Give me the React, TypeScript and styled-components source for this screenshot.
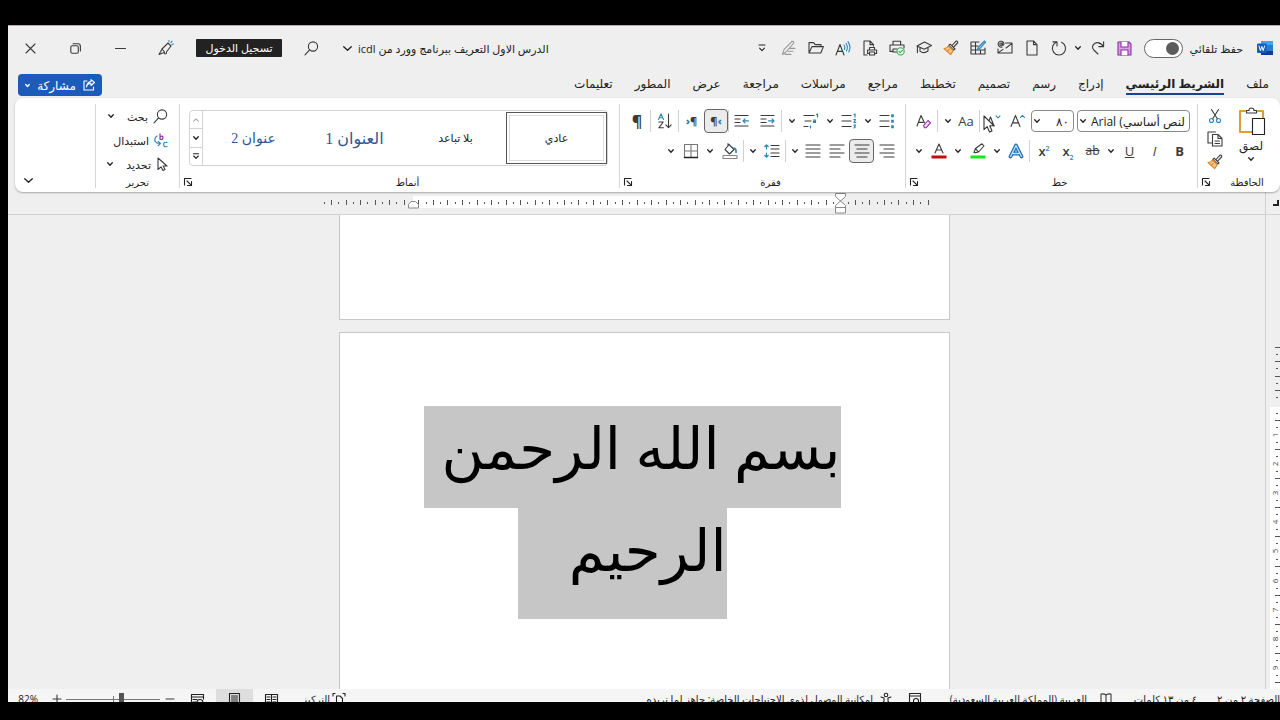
import React from "react";
import styled, { createGlobalStyle } from "styled-components";

const uiFont = `"Open Sans", "DejaVu Sans", sans-serif`;
const blue = "#2a86b8";
const ink = "#3b3b3b";

const GlobalStyle = createGlobalStyle`
  * { box-sizing: border-box; }
  body { margin: 0; background: #000; overflow: hidden; }
  button, input { font: inherit; color: inherit; }
  svg { display: block; flex: none; overflow: visible; }
`;

const Screen = styled.div`
  height: 100vh;
  padding: 25px 0 18px 8px;
  background: #000;
  display: flex;
`;

const Window = styled.main`
  flex: 1;
  min-width: 0;
  display: flex;
  flex-direction: column;
  overflow: hidden;
  background: #efefef;
  border-top: 1px solid #b5adb0;
  font-family: ${uiFont};
  font-size: 11px;
  color: #222;
  white-space: nowrap;
`;

const TitleBar = styled.header`
  height: 44px;
  flex: none;
  display: flex;
  justify-content: space-between;
  align-items: center;
`;

const BarGroup = styled.div`
  display: flex;
  align-items: center;
`;

const Cell = styled.button<{ $w?: number; $h?: number; $on?: boolean }>`
  width: ${(p) => p.$w ?? 27}px;
  height: ${(p) => p.$h ?? 24}px;
  flex: none;
  padding: 0;
  border: 0;
  background: none;
  display: flex;
  align-items: center;
  justify-content: center;
  ${(p) =>
    p.$on &&
    `
    background: #ebebeb;
    border: 1px solid #666;
    border-radius: 4px;
  `}
`;

const WordLogo = styled.span`
  width: 30px;
  display: flex;
  justify-content: center;
`;

const AutoSave = styled.label`
  width: 112px;
  padding-right: 7px;
  display: flex;
  align-items: center;
  justify-content: space-between;
`;

const Toggle = styled.input`
  appearance: none;
  width: 39px;
  height: 19px;
  margin: 0 0 0 6px;
  border: 1px solid #666;
  border-radius: 10px;
  background: #fff;
  display: flex;
  align-items: center;
  padding: 0 3px;
  &::before {
    content: "";
    width: 13px;
    height: 13px;
    border-radius: 50%;
    background: #5c5c5c;
  }
`;

const DocTitle = styled.h1`
  margin: 0;
  font-size: 11px;
  font-weight: 400;
`;

const SignIn = styled.button`
  width: 86px;
  height: 18px;
  margin: 0 4px 0 8px;
  padding: 0;
  border: 0;
  border-radius: 1px;
  background: #222;
  color: #fff;
  line-height: 18px;
`;

const TabBar = styled.nav`
  height: 28px;
  flex: none;
  display: flex;
  align-items: center;
  padding: 2px 11px 0 10px;
  gap: 22px;
`;

const Tab = styled.a<{ $active?: boolean }>`
  height: 20px;
  line-height: 18px;
  font-size: 12px;
  color: #222;
  text-decoration: none;
  font-weight: ${(p) => (p.$active ? 700 : 400)};
  border-bottom: 2px solid ${(p) => (p.$active ? "#1c4390" : "transparent")};
`;

const Share = styled.button`
  width: 84px;
  height: 22px;
  margin-right: auto;
  padding: 0 7px;
  border: 0;
  border-radius: 4px;
  background: #1b5cbb;
  color: #fff;
  font-size: 12px;
  display: flex;
  align-items: center;
  justify-content: space-between;
`;

const Ribbon = styled.section`
  height: 94px;
  flex: none;
  margin-left: 7px;
  background: #fff;
  border-radius: 8px;
  box-shadow: 0 1px 2px rgba(0, 0, 0, 0.3);
  display: flex;
  padding: 6px 0 4px;
  z-index: 1;
`;

const Group = styled.section<{ $w?: number }>`
  ${(p) => (p.$w ? `width: ${p.$w}px; flex: none;` : "flex: 1; min-width: 0;")}
  border-left: 1px solid #d6d6d6;
  display: flex;
  flex-direction: column;
`;

const Row = styled.div<{ $start: number }>`
  height: 30px;
  flex: none;
  padding-right: ${(p) => p.$start}px;
  padding-top: 4px;
  display: flex;
  align-items: center;
`;

const Sep = styled.span<{ $gap?: number }>`
  width: 1px;
  height: 22px;
  flex: none;
  background: #d0d0d0;
  margin-right: ${(p) => p.$gap ?? 0}px;
`;

const GroupFooter = styled.footer`
  margin-top: auto;
  height: 12px;
  flex: none;
  display: flex;
  align-items: center;
  font-size: 10px;
  line-height: 12px;
`;

const GroupLabel = styled.span`
  flex: 1;
  text-align: center;
`;

const Combo = styled.div<{ $w: number }>`
  width: ${(p) => p.$w}px;
  height: 22px;
  flex: none;
  margin-left: 3px;
  padding: 0 4px 0 2px;
  border: 1px solid #8a8a8a;
  border-radius: 4px;
  display: flex;
  align-items: center;
  font-size: 12px;
  & + & { margin-left: 0; }
`;

const ComboInput = styled.input`
  flex: 1;
  min-width: 0;
  width: 10px;
  padding: 0;
  border: 0;
  outline: 0;
  background: none;
`;

const Glyph = styled.span<{ $size?: number; $weight?: number }>`
  font-family: ${uiFont};
  font-size: ${(p) => p.$size ?? 13}px;
  font-weight: ${(p) => p.$weight ?? 400};
  color: ${ink};
  direction: ltr;
  line-height: 20px;
  & sup, & sub { font-size: 7px; color: ${blue}; line-height: 1; }
  & b { color: ${blue}; }
`;

const CursorOver = styled.span`
  position: relative;
  display: flex;
  & > svg:last-child { position: absolute; left: -2px; top: 1px; }
`;

const ClipBody = styled.div`
  display: flex;
  padding-right: 15px;
  gap: 12px;
`;

const Paste = styled.button`
  width: 28px;
  padding: 3px 0 0;
  border: 0;
  background: none;
  display: flex;
  flex-direction: column;
  align-items: center;
  font-size: 12px;
  line-height: 20px;
`;

const ClipTools = styled.div`
  width: 20px;
  display: flex;
  flex-direction: column;
  align-items: center;
`;

const StylesBody = styled.div`
  padding: 6px 11px 0 9px;
  display: flex;
`;

const Gallery = styled.div`
  flex: 1;
  height: 56px;
  border: 1px solid #d4d4d4;
  border-radius: 4px;
  display: flex;
  align-items: center;
`;

const StyleCard = styled.button<{ $on?: boolean; $size: number; $color?: string }>`
  flex: 1;
  height: 52px;
  padding: 0;
  border: 1px solid ${(p) => (p.$on ? "#555" : "transparent")};
  box-shadow: ${(p) => (p.$on ? "inset 0 0 0 2px #fff, inset 0 0 0 3px #dcdcdc" : "none")};
  background: none;
  font-family: "Liberation Serif", "DejaVu Sans", serif;
  font-size: ${(p) => p.$size}px;
  color: ${(p) => p.$color ?? "#222"};
`;

const GalleryNav = styled.div`
  width: 13px;
  height: 54px;
  border-right: 1px solid #d4d4d4;
  display: flex;
  flex-direction: column;
`;

const NavButton = styled.button`
  flex: 1;
  padding: 0;
  border: 0;
  background: none;
  display: flex;
  align-items: center;
  justify-content: center;
  & + & { border-top: 1px solid #d4d4d4; }
`;

const EditRow = styled.button`
  height: 24px;
  flex: none;
  padding: 0 11px 0 0;
  border: 0;
  background: none;
  display: flex;
  align-items: center;
  gap: 5px;
  & > svg:last-child { margin-right: 8px; }
`;

const Collapse = styled.div`
  width: 80px;
  flex: none;
  display: flex;
  align-items: flex-end;
  justify-content: flex-end;
`;

const RulerRow = styled.div`
  height: 23px;
  flex: none;
  display: grid;
  grid-template-columns: 15px 1fr 15px;
  border-bottom: 1px solid #d2d2d2;
`;

const RulerCorner = styled.div`
  border-left: 1px solid #cfcfcf;
  display: flex;
  align-items: center;
`;

const RulerTrack = styled.div`
  display: flex;
  justify-content: center;
`;

const Workspace = styled.div`
  flex: 1;
  min-height: 0;
  display: grid;
  grid-template-columns: 15px 1fr 15px;
  overflow: hidden;
`;

const SideRuler = styled.div`
  border-left: 1px solid #cfcfcf;
  overflow: hidden;
`;

const Pages = styled.div`
  min-height: 0;
  display: flex;
  flex-direction: column;
  align-items: center;
  gap: 12px;
  overflow: hidden;
`;

const Page = styled.article<{ $tail?: boolean }>`
  width: 611px;
  background: #fff;
  border: 1px solid #c8c8c8;
  ${(p) => (p.$tail ? "height: 105px; border-top: 0; flex: none;" : "flex: 1; min-height: 0; border-bottom: 0; padding: 73px 108px 0 84px;")}
`;

const Heading = styled.p`
  margin: 0;
  display: flex;
  flex-direction: column;
  align-items: flex-start;
  font-family: "Liberation Serif", "DejaVu Sans", serif;
  font-size: 58px;
  color: #000;
`;

const Line = styled.span<{ $w: number; $h: number; $inset?: number }>`
  width: ${(p) => p.$w}px;
  height: ${(p) => p.$h}px;
  line-height: 88px;
  margin-right: ${(p) => p.$inset ?? 0}px;
  background: #c6c6c6;
`;

const Status = styled.footer`
  height: 13px;
  flex: none;
  display: flex;
  justify-content: space-between;
  align-items: flex-start;
  overflow: hidden;
  background: #f5f5f5;
  font-size: 10px;
`;

const StatusGroup = styled.div`
  height: 20px;
  display: flex;
  align-items: center;
`;

const StatusText = styled.span<{ $w: number }>`
  width: ${(p) => p.$w}px;
  flex: none;
`;

const ZoomValue = styled.output`
  width: 39px;
  padding-right: 9px;
`;

const ViewButton = styled.button<{ $on?: boolean; $w?: number }>`
  width: ${(p) => p.$w ?? 37}px;
  height: 20px;
  flex: none;
  padding: 0;
  border: 0;
  background: ${(p) => (p.$on ? "#dedede" : "none")};
  display: flex;
  align-items: center;
  justify-content: center;
`;

const Zoom = styled.input`
  appearance: none;
  width: 94px;
  height: 12px;
  margin: 0;
  background:
    linear-gradient(#777, #777) 50% 50% / 1px 6px no-repeat,
    linear-gradient(#777, #777) 0 50% / 100% 1px no-repeat;
  &::-webkit-slider-thumb {
    appearance: none;
    width: 5px;
    height: 12px;
    background: #555;
  }
`;

type IcProps = { w?: number; h?: number; c?: string; sw?: number; children: React.ReactNode };
const Ic = ({ w = 16, h = 16, c = ink, sw = 1.1, children }: IcProps) => (
  <svg width={w} height={h} viewBox={`0 0 ${w} ${h}`} fill="none" stroke={c} strokeWidth={sw} strokeLinecap="round" strokeLinejoin="round" aria-hidden="true">
    {children}
  </svg>
);

const Chevron = ({ c = "#222", s = 6 }: { c?: string; s?: number }) => (
  <Ic w={s} h={s} c={c} sw={1.3}>
    <path d={`M.7 ${s * 0.3}L${s / 2} ${s * 0.7}L${s - 0.7} ${s * 0.3}`} />
  </Ic>
);
const Drop = ({ w = 12, label = "خيارات" }: { w?: number; label?: string }) => (
  <Cell $w={w} aria-label={label}><Chevron /></Cell>
);
const Magnifier = () => (
  <Ic w={15} h={15}><circle cx="9" cy="5.5" r="4.6" /><path d="M5.6 8.9L1 13.8" /></Ic>
);
const Brush = () => (
  <Ic>
    <path d="M9 5.5L13 1.2Q15 .8 14.6 3L10.8 6.9" />
    <path d="M7.2 4.2L12 9L10.6 10.2L5.8 5.4Z" fill="#fff" />
    <path d="M5.4 6L10.2 10.6L7.6 14.6L1 8.6Q4 8.4 5.4 6Z" fill="#f6c386" stroke="#dd8427" />
    <path d="M4.4 11.4L6 9.6" stroke="#dd8427" />
  </Ic>
);
const Lines = ({ rows }: { rows: [number, number][] }) => (
  <Ic w={14} h={14} sw={1.2}>{rows.map(([a, b], i) => <path key={i} d={`M${a} ${1 + i * 4}H${b}`} />)}</Ic>
);
const IndentIcon = ({ right }: { right?: boolean }) => (
  <Ic w={14} h={14} sw={1.2}>
    <path d="M0 1.5H13M0 5H5M0 8.5H5M0 12H13" />
    <path d={right ? "M7.5 6.8H13M11 4.8L13 6.8L11 8.8" : "M13.5 6.8H8M10 4.8L8 6.8L10 8.8"} stroke={blue} />
  </Ic>
);
const Launcher = () => (
  <Cell $w={16} $h={12} aria-label="إعدادات المجموعة">
    <Ic w={8} h={8} c="#222"><path d="M.5 7V.5H7M3 3L7.2 7.2M7.5 3.5V7.5H3.5" /></Ic>
  </Cell>
);

const Footer = ({ label, launch = true }: { label: string; launch?: boolean }) => (
  <GroupFooter><GroupLabel>{label}</GroupLabel>{launch && <Launcher />}</GroupFooter>
);

const tabs = ["ملف", "الشريط الرئيسي", "إدراج", "رسم", "تصميم", "تخطيط", "مراجع", "مراسلات", "مراجعة", "عرض", "المطور", "تعليمات"];

const quick: [string, React.ReactNode][] = [
  ["جديد", <Ic w={12} h={16}><path d="M1 1H7.5L11 4.6V15H1ZM7.5 1V4.6H11" /></Ic>],
  ["بريد", <Ic><path d="M8.5 3H15V13H1V9M9 8L15 3.4M1.4 12.6L6 9.4" /><circle cx="4" cy="4.2" r="1.2" /><path d="M5.2 3V5Q7 5.6 6.9 3.8A2.9 2.9 0 1 0 5 6.9" /></Ic>],
  ["جدول", <Ic><path d="M9 2H1V14H15V8M1 6H8M1 10H15M5.5 2V14M10.5 10V14" /><path d="M14.5 1L15.6 2.2L9.6 8.8L7.6 9.4L8.2 7.2Z" fill="#8fc8ea" stroke={blue} /></Ic>],
  ["نسخ التنسيق", <Brush />],
  ["تعلم", <Ic><path d="M1 6L8.5 2L15.5 5.4L8.2 9.2ZM4 7.6V11.4Q8 14 12 11V7.4M1.4 6.2V12.6" /></Ic>],
  ["طباعة سريعة", <Ic><path d="M4 5V1.2H11.6V5M7.5 12H4V9H8M4 11.4H1V5H15V8" /><circle cx="11.6" cy="11.4" r="3.6" stroke="#3fa757" fill="#e9f7ec" /><path d="M10 11.4L11.2 12.7L13.4 10.3" stroke="#3fa757" /></Ic>],
  ["معاينة", <Ic><path d="M5 15H2V1H8L11.5 4.6V6M8 1V4.6H11.5M7.5 10V7.5H12.5V10M7.5 13.5H5.6V10H14.6V13.5H12.6M7.5 12H12.6V15H7.5Z" /></Ic>],
  ["قراءة", <Ic><path d="M1 15L5 4.5L9 15M2.4 11.4H7.6" /><path d="M9 5Q10.6 7 9.4 9.4M11 3.4Q13.4 6.8 11.5 11M13 1.6Q16.4 6.5 13.8 12" stroke={blue} /></Ic>],
  ["فتح", <Ic><path d="M1 13V2.6H5.6L7.2 4.6H13V6.6M1 13L4 6.6H15.4L12.8 13Z" /></Ic>],
  ["مسودة", <Ic c="#999"><path d="M1.4 14.6L3 9.6L11 1.4Q13 1 12.8 3L5 12ZM8 8.4H14M7 11.2H12M4 14.4H10" /></Ic>],
  ["تخصيص", <Ic w={8} h={8} c="#222"><path d="M1 1H7M1.6 4.2L4 6.6L6.4 4.2" /></Ic>],
];

const HorizontalRuler = () => {
  const marks = Array.from({ length: 42 }, (_, i) => 331 + i * 14.55).filter((x) => x < 930);
  return (
    <svg width="643" height="22" viewBox="323 193 643 22" aria-hidden="true">
      <rect x="413" y="197" width="427" height="12" fill="#fff" />
      {marks.map((x, i) => (
        <g key={i} fill="#555">
          <rect x={Math.round(x - 7.3)} y="203" width="1" height="2" />
          <rect x={Math.round(x)} y="201" width="1" height="5" />
        </g>
      ))}
      <path d="M408.500 209V205.500L411 202.500H415.500L418.500 205.500V209Z" fill="#fff" stroke="#888" />
      <path d="M835.500 194.500H845.500V197.500L840.500 202L845.500 206.500V214H835.500V206.500L840.500 202L835.500 197.500ZM835.500 208.500H845.500" fill="#fff" stroke="#888" />
    </svg>
  );
};

const VerticalRuler = () => (
  <svg width="15" height="473" viewBox="1265 215 15 473" aria-hidden="true">
    <rect x="1270" y="407" width="10" height="400" fill="#fff" />
    {[347, 361, 376, 390].map((y) => (
      <g key={y} fill="#555"><rect x="1275" y={y} width="5" height="1" /><rect x="1276" y={y + 7} width="2" height="1" /></g>
    ))}
    {Array.from({ length: 10 }, (_, i) => {
      const y = Math.round(420 + i * 29.1);
      return (
        <g key={i} fill="#555">
          <rect x="1276" y={y - 7} width="2" height="1" />
          <rect x="1275" y={y} width="5" height="1" />
          <rect x="1276" y={y + 7} width="2" height="1" />
          {i < 9 && <text x="1278" y={y + 15} fontSize="8" textAnchor="middle" direction="ltr" transform={`rotate(-90 1278 ${y + 15})`} fill="#444">{i + 1}</text>}
        </g>
      );
    })}
  </svg>
);

export default function App() {
  return (
    <Screen>
      <GlobalStyle />
      <Window dir="rtl" lang="ar">
        <TitleBar>
          <BarGroup>
            <WordLogo>
              <Ic w={16} h={16} c="none">
                <rect x="4" y="1" width="12" height="14" rx="1" fill="#2b7cd3" />
                <rect x="4" y="1" width="12" height="4" fill="#41a5ee" />
                <rect x="4" y="11" width="12" height="4" fill="#103f91" />
                <rect x="0" y="3.500" width="9.500" height="9.500" rx="1" fill="#185abd" />
                <path d="M2 6L3.400 10.600L4.800 6.400L6.200 10.600L7.600 6" stroke="#fff" strokeWidth="1" />
              </Ic>
            </WordLogo>
            <AutoSave>حفظ تلقائي<Toggle type="checkbox" /></AutoSave>
            <Cell aria-label="حفظ">
              <Ic w={15} h={15} c="#8c2fa3"><path d="M1 1H12L14 3V14H1Z" fill="#d99be6" /><path d="M4 1V6H11V1M4 14V9H11V14" fill="#fff" /></Ic>
            </Cell>
            <Cell aria-label="إعادة"><Ic w={14} h={14}><path d="M12.600 .8V5.600H7.800M12.400 5.400Q8.600 .2 4 2.200Q-.4 5.200 2.800 9L7 13" /></Ic></Cell>
            <Drop />
            <Cell aria-label="تكرار"><Ic><path d="M2 1.900H6V5.900M5.800 2.100A6.600 6.600 0 1 0 10.600 2.300" /></Ic></Cell>
            {quick.map(([name, icon]) => <Cell key={name} aria-label={name}>{icon}</Cell>)}
          </BarGroup>
          <BarGroup>
            <DocTitle>الدرس الاول التعريف ببرنامج وورد من icdl</DocTitle>
            <Cell $w={22} aria-label="تفاصيل الملف"><Chevron s={9} /></Cell>
            <Cell $w={50} aria-label="بحث"><Magnifier /></Cell>
            <SignIn>تسجيل الدخول</SignIn>
            <Cell $w={45} aria-label="القلم">
              <Ic><path d="M1 14.500L4 9L10 3L13 6L8.400 12Q9 14 7 14L6 12.500ZM4 9L6.500 12" /><path d="M11 1.600V.6M13 2.600L14 1.200M14 4.500L15.400 4" stroke={blue} /></Ic>
            </Cell>
            <Cell $w={45} aria-label="تصغير"><Ic w={11} h={11}><path d="M.5 5.500H10.500" /></Ic></Cell>
            <Cell $w={45} aria-label="استعادة"><Ic w={11} h={11}><rect x=".8" y="2.800" width="7.500" height="7.500" rx="1.500" /><path d="M3 .8H8Q10.400 .8 10.400 3.200V8" /></Ic></Cell>
            <Cell $w={45} aria-label="إغلاق"><Ic w={11} h={11}><path d="M1 1L10 10M10 1L1 10" /></Ic></Cell>
          </BarGroup>
        </TitleBar>

        <TabBar>
          {tabs.map((t, i) => <Tab key={t} href="#" $active={i === 1}>{t}</Tab>)}
          <Share>
            <Ic w={12} h={12} c="#fff"><path d="M4 2H1V11H10.500V8M3.500 8Q4 4.500 8 4.500V6.500L11.500 3.500L8 .6V2.600Q4 3 3.500 8Z" /></Ic>
            مشاركة
            <Chevron c="#fff" s={5} />
          </Share>
        </TabBar>

        <Ribbon>
          <Group $w={83}>
            <ClipBody>
              <Paste>
                <Ic w={27} h={29}>
                  <path d="M7 4H2V25H14M20 4H25V11" stroke="#e09a3a" strokeWidth="2" />
                  <path d="M8.500 6V3.500H11Q11 1 13.500 1Q16 1 16 3.500H18.500V6Z" fill="#fff" />
                  <rect x="14.500" y="11.500" width="12" height="16" fill="#fff" stroke="#222" />
                </Ic>
                لصق
                <Chevron />
              </Paste>
              <ClipTools>
                <Cell $w={20} $h={23} aria-label="قص"><Ic w={12} h={14}><path d="M2.500 .5L8.500 10M9.500 .5L3.500 10" /><circle cx="2.500" cy="11.500" r="2" stroke={blue} /><circle cx="9.500" cy="11.500" r="2" stroke={blue} /></Ic></Cell>
                <Cell $w={20} $h={23} aria-label="نسخ"><Ic><path d="M5 12H1V1H8.500M5.500 3.500H11L15 7.500V15H5.500ZM11 3.500V7.500H15M8 10H12.500M8 12.500H12.500" /></Ic></Cell>
                <Cell $w={20} $h={23} aria-label="نسخ التنسيق"><Brush /></Cell>
              </ClipTools>
            </ClipBody>
            <Footer label="الحافظة" />
          </Group>

          <Group $w={292}>
            <Row $start={7}>
              <Combo $w={113}>
                <ComboInput aria-label="الخط" defaultValue="لنص أساسي) Arial" />
                <Chevron />
              </Combo>
              <Combo $w={43}>
                <ComboInput aria-label="حجم الخط" defaultValue="٨٠" />
                <Chevron />
              </Combo>
              <Cell aria-label="تكبير الخط"><Ic w={15} h={15}><path d="M1 12.500L5.500 1.500L10 12.500M2.600 8.900H8.400" /><path d="M10.500 3.500L12.500 1.300L14.500 3.500" stroke={blue} /></Ic></Cell>
              <Cell $w={24} aria-label="تصغير الخط">
                <CursorOver>
                  <Ic w={15} h={15}><path d="M2 12L5.500 3L9 12M3 9.400H8" /><path d="M11 1.800L13 4L15 1.800" stroke={blue} /></Ic>
                  <Ic w={12} h={18} c="#333"><path d="M1 1V14.500L4.200 11.600L6.500 17L9 16L6.800 10.800H11Z" fill="#fff" /></Ic>
                </CursorOver>
              </Cell>
              <Sep />
              <Cell $w={26} aria-label="تغيير حالة الأحرف"><Glyph>Aa</Glyph></Cell>
              <Drop w={10} />
              <Sep $gap={5} />
              <Cell aria-label="مسح التنسيق"><Ic w={16} h={15}><path d="M1 12L5 1.500L8.500 9M2.600 8.400H7" /><path d="M7.500 11.500L12 6.500L14.500 8.800L10 13.800H8.500Z" stroke="#9332ab" fill="#f0d9f5" /></Ic></Cell>
            </Row>
            <Row $start={5}>
              <Cell $w={25} aria-label="غامق"><Glyph $weight={700}>B</Glyph></Cell>
              <Cell $w={25} aria-label="مائل"><Glyph as="i">I</Glyph></Cell>
              <Cell $w={25} aria-label="تسطير"><Glyph as="u">U</Glyph></Cell>
              <Drop />
              <Cell $w={25} aria-label="يتوسطه خط"><Glyph as="s" $size={12}>ab</Glyph></Cell>
              <Cell $w={24} aria-label="منخفض"><Glyph $weight={600}>x<sub>2</sub></Glyph></Cell>
              <Cell $w={24} aria-label="مرتفع"><Glyph $weight={600}>x<sup>2</sup></Glyph></Cell>
              <Sep $gap={2} />
              <Cell $w={26} aria-label="تأثيرات النص">
                <Ic w={14} h={14}><path d="M1.500 12.500L7 1.500L12.500 12.500M4 9.500H10" stroke="#1f6fb5" strokeWidth="3.800" /><path d="M1.500 12.500L7 1.500L12.500 12.500M4 9.500H10" stroke="#bfe2f7" strokeWidth="1.300" /></Ic>
              </Cell>
              <Drop />
              <Cell aria-label="لون التمييز"><Ic w={16} h={16}><path d="M4 9.500L5.500 5.500L12 .8L14 3L8.500 9L5.500 9.600ZM5.500 5.600L8.500 8.800" /><rect x=".5" y="12.500" width="15" height="3" fill="#19e619" stroke="none" /></Ic></Cell>
              <Drop />
              <Cell aria-label="لون الخط"><Ic w={16} h={16}><path d="M4 10L8 1L12 10M5.200 7H10.800" /><rect x=".5" y="12.500" width="15" height="3" fill="#c00d0d" stroke="none" /></Ic></Cell>
              <Drop />
            </Row>
            <Footer label="خط" />
          </Group>

          <Group $w={286}>
            <Row $start={5}>
              <Cell $w={26} aria-label="تعداد نقطي"><Ic w={14} h={14} sw={1.200}><path d="M0 1.500H9M0 7H9M0 12.500H9" /><path d="M12.500 1.500V2M12.500 7V7.500M12.500 12.500V13" stroke={blue} strokeWidth="2.600" strokeLinecap="square" /></Ic></Cell>
              <Drop />
              <Cell $w={26} aria-label="تعداد رقمي"><Ic w={14} h={14} sw={1.200}><path d="M0 1.500H9M0 7H9M0 12.500H9" /><path d="M12 .5L13 0V3M11.800 5.500H13.500L12 8.500H13.800M11.800 11H13.500L12.600 12.300Q14.200 13.500 11.800 14" stroke={blue} /></Ic></Cell>
              <Drop />
              <Cell $w={26} aria-label="قائمة متعددة المستويات"><Ic w={14} h={14} sw={1.200}><path d="M0 1.500H10M1 7H7M0 12.500H4" /><path d="M12.500 .5L13.500 0V3M9.500 6H11.500V8.500H9.500V7.300H11.500M6.500 12V14" stroke={blue} /></Ic></Cell>
              <Drop />
              <Sep $gap={4} />
              <Cell $w={26} aria-label="إنقاص المسافة"><IndentIcon right /></Cell>
              <Cell $w={26} aria-label="زيادة المسافة"><IndentIcon /></Cell>
              <Sep />
              <Cell $w={24} $on aria-label="من اليمين إلى اليسار"><Glyph $size={11} $weight={700}>¶<b>‹</b></Glyph></Cell>
              <Cell $w={25} aria-label="من اليسار إلى اليمين"><Glyph $size={11} $weight={700}><b>›</b>¶</Glyph></Cell>
              <Sep />
              <Cell aria-label="فرز"><Ic w={16} h={16}><path d="M1.500 6.500L4 .8L6.500 6.500M2.400 4.800H5.600" stroke={blue} /><path d="M1.800 9H6.200L1.800 14.800H6.400M11.500 1V14.500M8.800 11.800L11.500 14.600L14.200 11.800" /></Ic></Cell>
              <Sep />
              <Cell $w={26} aria-label="إظهار العلامات"><Glyph $size={16} $weight={700}>¶</Glyph></Cell>
            </Row>
            <Row $start={5}>
              <Cell $w={26} aria-label="محاذاة لليمين"><Lines rows={[[0, 14], [4, 14], [0, 14], [4, 14]]} /></Cell>
              <Cell $w={25} $on aria-label="توسيط"><Lines rows={[[0, 14], [2, 12], [0, 14], [2, 12]]} /></Cell>
              <Cell $w={24} aria-label="محاذاة لليسار"><Lines rows={[[0, 14], [0, 10], [0, 14], [0, 10]]} /></Cell>
              <Cell $w={25} aria-label="ضبط"><Lines rows={[[0, 14], [0, 14], [0, 14], [0, 14]]} /></Cell>
              <Drop w={10} />
              <Sep $gap={4} />
              <Cell aria-label="تباعد الأسطر"><Ic w={16} h={14} sw={1.200}><path d="M7 1.500H15M7 5H15M7 9H15M7 12.500H15" /><path d="M2.500 .8V5M.8 2.500L2.500 .8L4.200 2.500M2.500 9V13.200M.8 11.500L2.500 13.200L4.200 11.500" stroke={blue} /></Ic></Cell>
              <Drop w={10} />
              <Sep $gap={4} />
              <Cell aria-label="تظليل"><Ic w={16} h={16}><path d="M7 1.500L12 6.500L7.500 11L3 6.500ZM6 3V.6" /><path d="M12 5Q14.500 6 14 9.500" stroke={blue} strokeWidth="1.600" /><rect x="1" y="12.500" width="14" height="3" stroke="#888" /></Ic></Cell>
              <Drop />
              <Cell aria-label="حدود"><Ic w={14} h={14} c="#777"><path d="M.5 .5H13.500V13.500M.5 .5V13.500M7 .5V13M.5 7H13.500" /><path d="M.5 13.500H13.500" stroke="#222" strokeWidth="1.500" /></Ic></Cell>
              <Drop />
            </Row>
            <Footer label="فقرة" />
          </Group>

          <Group>
            <StylesBody>
              <Gallery>
                <StyleCard $on $size={11}>عادي</StyleCard>
                <StyleCard $size={11}>بلا تباعد</StyleCard>
                <StyleCard $size={16} $color="#2f5597">العنوان 1</StyleCard>
                <StyleCard $size={14} $color="#2f5597">عنوان 2</StyleCard>
                <GalleryNav>
                  <NavButton aria-label="أعلى"><Ic w={6} h={6} c="#aaa"><path d="M.7 4.200L3 1.800L5.300 4.200" /></Ic></NavButton>
                  <NavButton aria-label="أسفل"><Chevron /></NavButton>
                  <NavButton aria-label="المزيد"><Ic w={6} h={6} c="#222"><path d="M.5 .8H5.500M.7 3L3 5.300L5.300 3" /></Ic></NavButton>
                </GalleryNav>
              </Gallery>
            </StylesBody>
            <Footer label="أنماط" />
          </Group>

          <Group $w={84}>
            <EditRow><Magnifier />بحث<Chevron /></EditRow>
            <EditRow>
              <Ic w={14} h={15} sw={1.200}><path d="M6 .8V6.500M6 4Q8.600 2 9 4.600Q8.600 7.400 6 6" stroke="#9332ab" /><path d="M13 9.500Q9.500 8.500 9.600 11.500Q9.800 14.500 13 13.500M3 3Q0 5 1.200 8.500Q2.400 10.500 6 10.500M4.200 8.400L6.400 10.500L4.200 12.600" stroke={blue} /></Ic>
              <span>استبدال</span>
            </EditRow>
            <EditRow><Ic w={12} h={14}><path d="M2 1V12.500L5 9.800L7 13.500L9 12.500L7.200 9H11Z" /></Ic>تحديد<Chevron /></EditRow>
            <Footer label="تحرير" launch={false} />
          </Group>
          <Collapse><Cell $h={16} aria-label="طي الشريط"><Chevron s={9} /></Cell></Collapse>
        </Ribbon>

        <RulerRow>
          <RulerCorner><Ic w={14} h={8} c="#222" sw={2}><path d="M12 1V6H7" strokeLinecap="butt" strokeLinejoin="miter" /></Ic></RulerCorner>
          <RulerTrack><HorizontalRuler /></RulerTrack>
        </RulerRow>
        <Workspace>
          <SideRuler><VerticalRuler /></SideRuler>
          <Pages>
            <Page $tail />
            <Page>
              <Heading>
                <Line $w={417} $h={102}>بسم الله الرحمن</Line>
                <Line $w={209} $h={111} $inset={114}>الرحيم</Line>
              </Heading>
            </Page>
          </Pages>
        </Workspace>

        <Status>
          <StatusGroup>
            <StatusText $w={83}>الصفحة ٢ من ٢</StatusText>
            <StatusText $w={72}>٤ من ١٣ كلمات</StatusText>
            <ViewButton $w={38} aria-label="تدقيق"><Ic w={12} h={14}><path d="M6 3V12M6 3Q4 1.500 1 2V12H11V2Q8 1.500 6 3Z" /></Ic></ViewButton>
            <StatusText $w={156}>العربية (المملكة العربية السعودية)</StatusText>
            <ViewButton $w={32} aria-label="تسجيل ماكرو"><Ic w={12} h={14} c="#222"><path d="M.5 1.500H11.500V12H.5ZM.5 4H11.500" /><circle cx="7" cy="9" r="2.500" /></Ic></ViewButton>
            <ViewButton $w={26} aria-label="إمكانية الوصول"><Ic w={12} h={14} c="#222"><circle cx="6" cy="3" r="1.800" /><path d="M1 5L4 6V9L2 13M11 5L8 6V9L10 13" /></Ic></ViewButton>
            <span>إمكانية الوصول لذوي الاحتياجات الخاصة: جاهز لما تريده</span>
          </StatusGroup>
          <StatusGroup>
            <ViewButton $w={18} aria-label="التركيز"><Ic w={14} h={14} c="#222"><path d="M4.500 4H8L10.500 6.500V14H4.500ZM1 4V1.500H3M13 4V1.500H11" /></Ic></ViewButton>
            <StatusText $w={40}>التركيز</StatusText>
            <ViewButton aria-label="وضع القراءة"><Ic w={13} h={13} c="#222"><path d="M6.500 2V13M.5 1.500H12.500V13H.5ZM2 4H5M2 6.500H5M2 9H5M8 4H11M8 6.500H11M8 9H11" /></Ic></ViewButton>
            <ViewButton $on aria-label="تخطيط الطباعة"><Ic w={11} h={14} c="#222"><path d="M.5 1.500H10.500V14H.5ZM2.500 4H8.500M2.500 6H8.500M2.500 8H8.500M2.500 10H8.500" /></Ic></ViewButton>
            <ViewButton aria-label="تخطيط ويب"><Ic w={13} h={13} c="#222"><path d="M12.500 6V1.500H.5V13H5M.5 4H12.500M2 6.500H6M2 9H5" /><circle cx="9" cy="9.500" r="3" /><path d="M6 9.500H12" /></Ic></ViewButton>
            <ViewButton $w={19} aria-label="تصغير"><Ic w={8} h={8}><path d="M0 4H8" /></Ic></ViewButton>
            <Zoom type="range" min={0} max={100} defaultValue={40} aria-label="تكبير" />
            <ViewButton $w={19} aria-label="تكبير"><Ic w={8} h={8}><path d="M0 4H8M4 0V8" /></Ic></ViewButton>
            <ZoomValue>82%</ZoomValue>
          </StatusGroup>
        </Status>
      </Window>
    </Screen>
  );
}
